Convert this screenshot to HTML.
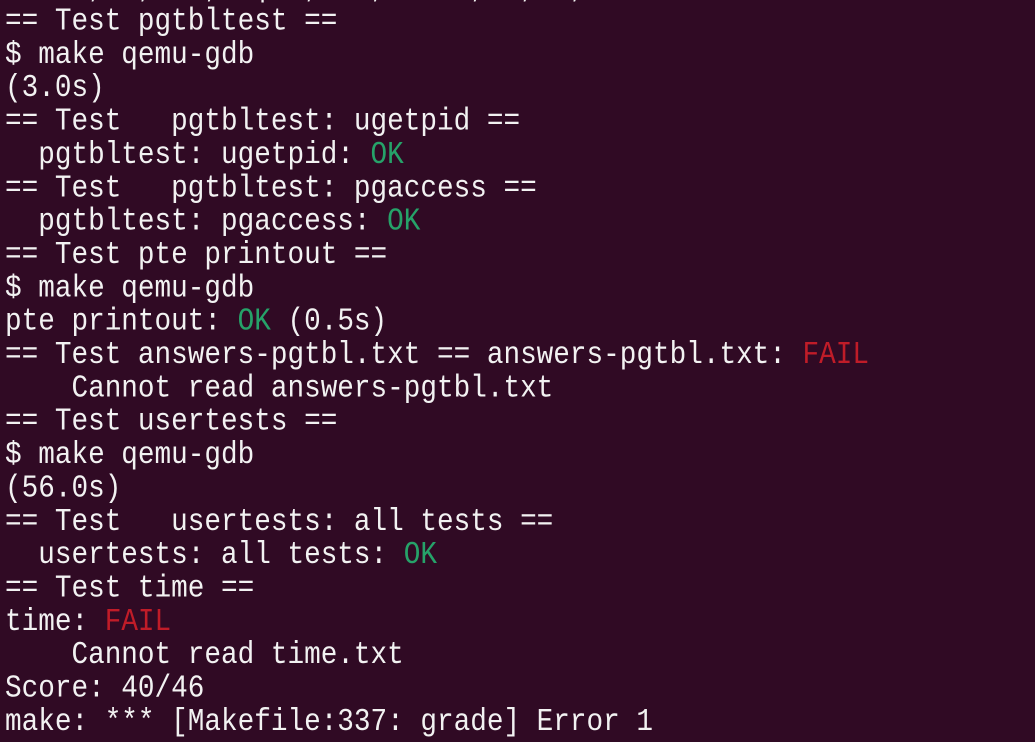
<!DOCTYPE html>
<html><head><meta charset="utf-8"><style>
html,body{margin:0;padding:0;width:1035px;height:742px;overflow:hidden;background:#300a24;}
pre{position:absolute;left:5px;top:-28px;margin:0;font-family:"Liberation Mono","DejaVu Sans Mono",monospace;font-size:27.7px;line-height:28.98px;color:#f2f2f2;transform:scaleY(1.15);transform-origin:0 0;white-space:pre;}
.g{color:#26a269}.r{color:#c01c28}
</style></head><body><pre>   ' ,  ,   ,  |  ,   ,  '  ,  ,  ,
== Test pgtbltest ==
$ make qemu-gdb
(3.0s)
== Test   pgtbltest: ugetpid ==
  pgtbltest: ugetpid: <span class="g">OK</span>
== Test   pgtbltest: pgaccess ==
  pgtbltest: pgaccess: <span class="g">OK</span>
== Test pte printout ==
$ make qemu-gdb
pte printout: <span class="g">OK</span> (0.5s)
== Test answers-pgtbl.txt == answers-pgtbl.txt: <span class="r">FAIL</span>
    Cannot read answers-pgtbl.txt
== Test usertests ==
$ make qemu-gdb
(56.0s)
== Test   usertests: all tests ==
  usertests: all tests: <span class="g">OK</span>
== Test time ==
time: <span class="r">FAIL</span>
    Cannot read time.txt
Score: 40/46
make: *** [Makefile:337: grade] Error 1
</pre></body></html>
